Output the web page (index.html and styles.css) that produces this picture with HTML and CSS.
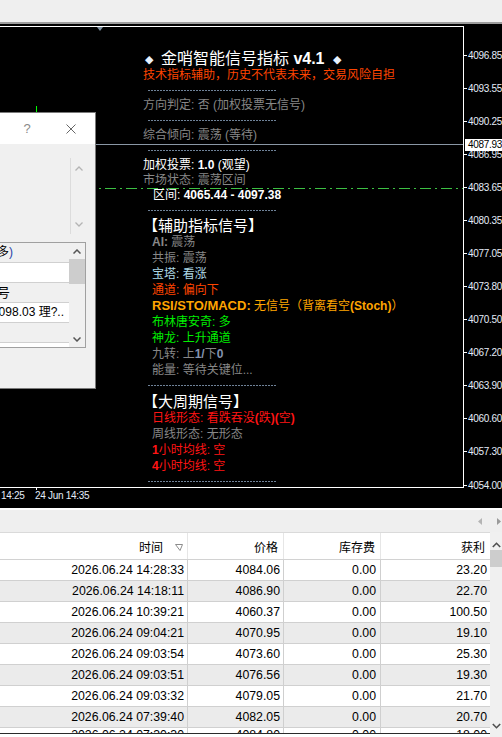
FILE: index.html
```html
<!DOCTYPE html>
<html lang="zh-CN">
<head>
    <meta charset="UTF-8">
    <meta name="viewport" content="width=device-width, initial-scale=1.0">
    <title>金哨智能信号指标</title>
    <link rel="stylesheet" href="styles.css">
</head>
<body>
    <div class="toolbar"></div>

    <div class="chart">
        <div class="chart-main">
            <div class="plot">
                <span class="shift-mark"></span>
                <span class="candle"></span>
                <div class="bid-line"></div>
                <div class="range-line"></div>

                <div class="panel">
                    <div class="title"><span class="dia">◆</span> 金哨智能信号指标 <b>v4.1</b> <span class="dia dia-r">◆</span></div>
                    <div class="ln warn">技术指标辅助，历史不代表未来，交易风险自担</div>
                    <div class="sep"></div>
                    <div class="ln gray">方向判定: 否 (加权投票无信号)</div>
                    <div class="sep"></div>
                    <div class="ln gray">综合倾向: 震荡 (等待)</div>
                    <div class="sep"></div>
                    <div class="ln white">加权投票: <b>1.0</b> (观望)</div>
                    <div class="ln gray">市场状态: 震荡区间</div>
                    <div class="ln white range">区间: <b>4065.44 - 4097.38</b></div>
                    <div class="sep"></div>

                    <div class="sub">
                        <div class="ln head">【辅助指标信号】</div>
                        <div class="ln item gray"><b>AI:</b> 震荡</div>
                        <div class="ln item gray">共振: 震荡</div>
                        <div class="ln item lblue">宝塔: 看涨</div>
                        <div class="ln item ored">通道: 偏向下</div>
                        <div class="ln item orange"><b class="wide">RSI/STO/MACD:</b> 无信号（背离看空<b>(Stoch)</b>）</div>
                        <div class="ln item green">布林唐安奇: 多</div>
                        <div class="ln item green">神龙: 上升通道</div>
                        <div class="ln item gray">九转: 上<b class="slate">1/</b>下<b class="slate">0</b></div>
                        <div class="ln item gray">能量: 等待关键位...</div>
                        <div class="sep"></div>
                        <div class="ln head">【大周期信号】</div>
                        <div class="ln item red">日线形态: 看跌吞没<b>(</b>跌<b>)(</b>空<b>)</b></div>
                        <div class="ln item gray">周线形态: 无形态</div>
                        <div class="ln item red"><b>1</b>小时均线: 空</div>
                        <div class="ln item red"><b>4</b>小时均线: 空</div>
                        <div class="sep"></div>
                    </div>
                </div>

                <!-- properties window lying over the chart -->
                <div class="dialog">
                    <div class="dlg-title">
                        <span class="dlg-help">?</span>
                        <svg class="dlg-close" width="10" height="10" viewBox="0 0 10 10">
                            <path d="M0.5 0.5 L9.5 9.5 M9.5 0.5 L0.5 9.5" stroke="#666" stroke-width="1" fill="none"/>
                        </svg>
                    </div>
                    <div class="dlg-body">
                        <div class="memo-scroll">
                            <svg width="8" height="5" viewBox="0 0 8 5"><path d="M0.5 4.5 L4 1 L7.5 4.5" stroke="#b4b4b4" stroke-width="1.3" fill="none"/></svg>
                            <svg width="8" height="5" viewBox="0 0 8 5"><path d="M0.5 0.5 L4 4 L7.5 0.5" stroke="#b4b4b4" stroke-width="1.3" fill="none"/></svg>
                        </div>
                        <div class="listbox">
                            <div class="lb-rows">
                                <div class="lb-row alt lb-a">信号方向 (多<span class="blue">)</span></div>
                                <div class="lb-row"></div>
                                <div class="lb-row alt lb-b">当前信号</div>
                                <div class="lb-row lb-c">4065.44-4098.03 理?..</div>
                                <div class="lb-row alt"></div>
                            </div>
                            <div class="lb-scroll">
                                <div class="lb-btn">
                                    <svg width="8" height="5" viewBox="0 0 8 5"><path d="M0.5 4.5 L4 1 L7.5 4.5" stroke="#555" stroke-width="1.5" fill="none"/></svg>
                                </div>
                                <div class="lb-thumb"></div>
                                <div class="lb-btn lb-down">
                                    <svg width="8" height="5" viewBox="0 0 8 5"><path d="M0.5 0.5 L4 4 L7.5 0.5" stroke="#555" stroke-width="1.5" fill="none"/></svg>
                                </div>
                            </div>
                        </div>
                    </div>
                </div>
            </div>

            <div class="axis">
                <div class="price">4096.85</div>
                <div class="price">4093.55</div>
                <div class="price">4090.25</div>
                <div class="price">4086.95</div>
                <div class="price">4083.65</div>
                <div class="price">4080.35</div>
                <div class="price">4077.05</div>
                <div class="price">4073.80</div>
                <div class="price">4070.50</div>
                <div class="price">4067.20</div>
                <div class="price">4063.90</div>
                <div class="price">4060.60</div>
                <div class="price">4057.30</div>
                <div class="price">4054.00</div>
                <div class="bid-box">4087.93</div>
            </div>
        </div>
        <div class="time-axis">
            <span class="time first">14:25</span>
            <span class="time tick">24 Jun 14:35</span>
        </div>
    </div>

    <div class="terminal">
        <div class="term-bar">
            <svg width="4" height="7" viewBox="0 0 4 7"><path d="M4 0 L0 3.5 L4 7 Z" fill="#b4b4b4"/></svg>
            <svg width="4" height="7" viewBox="0 0 4 7"><path d="M0 0 L4 3.5 L0 7 Z" fill="#9a9a9a"/></svg>
        </div>
        <div class="grid-area">
            <div class="table">
                <div class="thead">
                    <div class="th th-time">时间
                        <svg width="8" height="7" viewBox="0 0 8 7"><path d="M0.5 0.5 L7.5 0.5 L5 6.5 Z" stroke="#8c8c8c" stroke-width="1" fill="none"/></svg>
                    </div>
                    <div class="th">价格</div>
                    <div class="th th-swap">库存费</div>
                    <div class="th">获利</div>
                </div>
                <div class="tbody">
                    <div class="tr"><div class="td">2026.06.24 14:28:33</div><div class="td">4084.06</div><div class="td td-swap">0.00</div><div class="td">23.20</div></div>
                    <div class="tr alt"><div class="td">2026.06.24 14:18:11</div><div class="td">4086.90</div><div class="td td-swap">0.00</div><div class="td">22.70</div></div>
                    <div class="tr"><div class="td">2026.06.24 10:39:21</div><div class="td">4060.37</div><div class="td td-swap">0.00</div><div class="td">100.50</div></div>
                    <div class="tr alt"><div class="td">2026.06.24 09:04:21</div><div class="td">4070.95</div><div class="td td-swap">0.00</div><div class="td">19.10</div></div>
                    <div class="tr"><div class="td">2026.06.24 09:03:54</div><div class="td">4073.60</div><div class="td td-swap">0.00</div><div class="td">25.30</div></div>
                    <div class="tr alt"><div class="td">2026.06.24 09:03:51</div><div class="td">4076.56</div><div class="td td-swap">0.00</div><div class="td">19.30</div></div>
                    <div class="tr"><div class="td">2026.06.24 09:03:32</div><div class="td">4079.05</div><div class="td td-swap">0.00</div><div class="td">21.70</div></div>
                    <div class="tr alt"><div class="td">2026.06.24 07:39:40</div><div class="td">4082.05</div><div class="td td-swap">0.00</div><div class="td">20.70</div></div>
                    <div class="tr cut"><div class="td">2026.06.24 07:30:30</div><div class="td">4084.80</div><div class="td td-swap">0.00</div><div class="td">18.00</div></div>
                </div>
            </div>
            <div class="vscroll">
                <div class="sb-btn sb-up">
                    <svg width="9" height="6" viewBox="0 0 9 6"><path d="M0.8 5 L4.5 1.3 L8.2 5" stroke="#505050" stroke-width="1.6" fill="none"/></svg>
                </div>
                <div class="sb-thumb"></div>
                <div class="sb-btn sb-down">
                    <svg width="9" height="6" viewBox="0 0 9 6"><path d="M0.8 1 L4.5 4.7 L8.2 1" stroke="#505050" stroke-width="1.6" fill="none"/></svg>
                </div>
            </div>
        </div>
    </div>
</body>
</html>
```

FILE: styles.css
```css
body {
    margin: 0;
    width: 502px;
    overflow: hidden;
    background-color: #ffffff;
    font-family: "Liberation Sans", "Noto Sans CJK SC", sans-serif;
}

/* top toolbar strip */
.toolbar {
    height: 22px;
    background-color: #efefef;
    border-bottom: 2px solid #9d9d9d;
}

/* chart window */
.chart {
    background-color: #000000;
    padding-top: 2px;
    border-bottom: 2px solid #ffffff;
}

.chart-main {
    display: flex;
    height: 462px;
}

.plot {
    position: relative;
    flex: none;
    width: 464px;
    height: 462px;
    box-sizing: border-box;
    border: 1px solid #ffffff;
    border-left: 0;
    overflow: hidden;
}

.shift-mark {
    position: absolute;
    top: 0;
    left: 97px;
    width: 0;
    height: 0;
    border-left: 3px solid transparent;
    border-right: 3px solid transparent;
    border-top: 4px solid #7d8fa0;
}

.candle {
    position: absolute;
    top: 79px;
    left: 36px;
    width: 1px;
    height: 7px;
    background-color: #00ff00;
}

.bid-line {
    position: absolute;
    top: 117px;
    left: 0;
    right: 0;
    height: 1px;
    background-color: #8a97a5;
}

.range-line {
    position: absolute;
    top: 161px;
    left: 0;
    right: 0;
    height: 1px;
    background: repeating-linear-gradient(90deg, #3cc043 0 11px, transparent 11px 15px, #3cc043 15px 17px, transparent 17px 21px);
}

/* indicator text block */
.panel {
    display: flex;
    flex-direction: column;
    padding: 21.5px 0 0 143px;
    font-size: 12px;
    white-space: nowrap;
}

.panel b {
    font-family: "Liberation Sans", "Noto Sans CJK SC", sans-serif;
    font-weight: bold;
}

.title {
    height: 19px;
    line-height: 19px;
    font-size: 16px;
    color: #ffffff;
}

.dia {
    font-family: "DejaVu Sans", sans-serif;
    font-size: 11px;
    color: #e6f2ff;
    margin: 0 3px 0 2px;
    vertical-align: 1px;
}

.dia-r {
    margin: 0 0 0 4px;
}

.ln {
    flex: none;
    height: 15px;
    line-height: 15px;
}

.sep {
    flex: none;
    height: 15px;
    display: flex;
    align-items: center;
    padding-left: 5px;
}

.sep::after {
    content: "";
    width: 128px;
    height: 1px;
    background: repeating-linear-gradient(90deg, #6f8298 0 2px, transparent 2px 3px);
}

.sub .ln,
.sub .sep {
    height: 16px;
    line-height: 16px;
}

.range {
    padding-left: 10px;
}

.head {
    font-size: 15px;
    color: #ffffff;
}

.item {
    padding-left: 9px;
}

.warn { color: #ff4500; }
.gray { color: #878787; }
.white { color: #ffffff; }
.lblue { color: #add8e6; }
.ored { color: #ff4500; }
.orange { color: #ffa500; }
.green { color: #00ee00; }
.red { color: #ff1414; }
.slate { color: #8494b0; }

.panel .wide {
    font-size: 13px;
}

/* floating properties dialog */
.dialog {
    position: absolute;
    top: 85px;
    left: -200px;
    width: 296px;
    height: 277px;
    box-sizing: border-box;
    border: 1px solid #7a7a7a;
    background-color: #f0f0f0;
    font-size: 12px;
    color: #000000;
}

.dlg-title {
    height: 31px;
    background-color: #ffffff;
    display: flex;
    justify-content: flex-end;
    align-items: center;
    gap: 24px;
    padding-right: 14px;
}

.dlg-help {
    width: 20px;
    text-align: center;
    font-size: 13px;
    color: #8a8a8a;
}

.dlg-close {
    margin: 0 5px;
}

.dlg-body {
    display: flex;
    flex-direction: column;
    align-items: flex-end;
    padding: 14px 9px 0 0;
}

.memo-scroll {
    width: 16px;
    height: 76px;
    box-sizing: border-box;
    border-left: 1px solid #dcdcdc;
    display: flex;
    flex-direction: column;
    justify-content: space-between;
    align-items: center;
    padding: 8px 0 7px;
}

.listbox {
    margin-top: 8px;
    width: 270px;
    height: 106px;
    box-sizing: border-box;
    border: 1px solid #a0a0a0;
    display: flex;
    background-color: #ffffff;
}

.lb-rows {
    flex: 1;
    overflow: hidden;
}

.lb-row {
    height: 20px;
    line-height: 19px;
    box-sizing: border-box;
    border-bottom: 1px solid #d0d0d0;
    text-align: right;
    white-space: nowrap;
    overflow: hidden;
}

.lb-row.alt {
    background-color: #f0f0f0;
}

.lb-a { padding-right: 56px; }
.lb-b { padding-right: 59px; font-size: 13px; }
.lb-c { padding-right: 5px; }

.blue { color: #1f3fa8; }

.lb-scroll {
    width: 16px;
    background-color: #f0f0f0;
    display: flex;
    flex-direction: column;
}

.lb-btn {
    height: 16px;
    display: flex;
    justify-content: center;
    align-items: center;
}

.lb-thumb {
    height: 25px;
    background-color: #cdcdcd;
}

.lb-down {
    margin-top: auto;
}

/* price scale */
.axis {
    position: relative;
    width: 38px;
    height: 462px;
    box-sizing: border-box;
    padding-top: 12.5px;
    display: flex;
    flex-direction: column;
    font-size: 10px;
    letter-spacing: -0.3px;
    color: #e4ecf8;
}

.price {
    flex: none;
    height: 33.08px;
    display: flex;
    align-items: center;
}

.price::before {
    content: "";
    width: 3px;
    height: 1px;
    margin-right: 1px;
    background-color: #ffffff;
}

.bid-box {
    position: absolute;
    top: 113px;
    left: 1px;
    right: 0;
    height: 12px;
    line-height: 12px;
    padding-left: 3px;
    background-color: #ffffff;
    color: #000000;
}

/* time scale */
.time-axis {
    height: 20px;
    display: flex;
    font-size: 10px;
    letter-spacing: -0.3px;
    line-height: 16px;
    color: #e4ecf8;
}

.time.first {
    width: 34px;
    padding-left: 1px;
}

.time.tick {
    position: relative;
}

.time.tick::before {
    content: "";
    position: absolute;
    top: -1px;
    left: 1px;
    width: 1px;
    height: 3px;
    background-color: #ffffff;
}

/* terminal table */
.terminal {
    font-size: 12px;
    color: #000000;
}

.term-bar {
    height: 22px;
    background-color: #efefef;
    display: flex;
    justify-content: flex-end;
    align-items: center;
    gap: 15px;
    padding-right: 1px;
}

.grid-area {
    display: flex;
    height: 205px;
}

.table {
    width: 490px;
}

.thead {
    display: grid;
    grid-template-columns: 188px 96px 97px 109px;
    height: 28px;
    box-sizing: border-box;
    border-top: 1px solid #dadada;
    border-bottom: 1px solid #d2d2d2;
}

.th {
    display: flex;
    justify-content: flex-end;
    align-items: center;
    padding: 1px 5px 0 0;
    border-right: 1px solid #e6e6e6;
}

.th:last-child {
    border-right: 0;
}

.th-time {
    gap: 12px;
    padding-right: 4px;
}

.th-time svg {
    margin-top: 2px;
}

.tbody {
    height: 174px;
    box-sizing: border-box;
    border-bottom: 1px solid #2a2a2a;
    overflow: hidden;
}

.tr {
    display: grid;
    grid-template-columns: 188px 96px 97px 109px;
    height: 21px;
    box-sizing: border-box;
    border-bottom: 1px solid #d0d0d0;
}

.tr.alt {
    background-color: #ebebeb;
}

.td {
    line-height: 20px;
    font-size: 12.3px;
    text-align: right;
    padding-right: 3px;
    border-right: 1px solid #cfcfcf;
}

.td:last-child {
    border-right: 0;
}

.td-swap {
    padding-right: 4px;
}

.tr.cut .td {
    line-height: 14px;
}

.vscroll {
    width: 12px;
    background-color: #f0f0f0;
    display: flex;
    flex-direction: column;
    padding-top: 1px;
}

.sb-btn {
    height: 17px;
    display: flex;
    justify-content: center;
    align-items: center;
}

.sb-up svg {
    margin-top: 6px;
}

.sb-thumb {
    height: 17px;
    background-color: #cdcdcd;
}

.sb-down {
    margin-top: auto;
    margin-bottom: 3px;
}
```
